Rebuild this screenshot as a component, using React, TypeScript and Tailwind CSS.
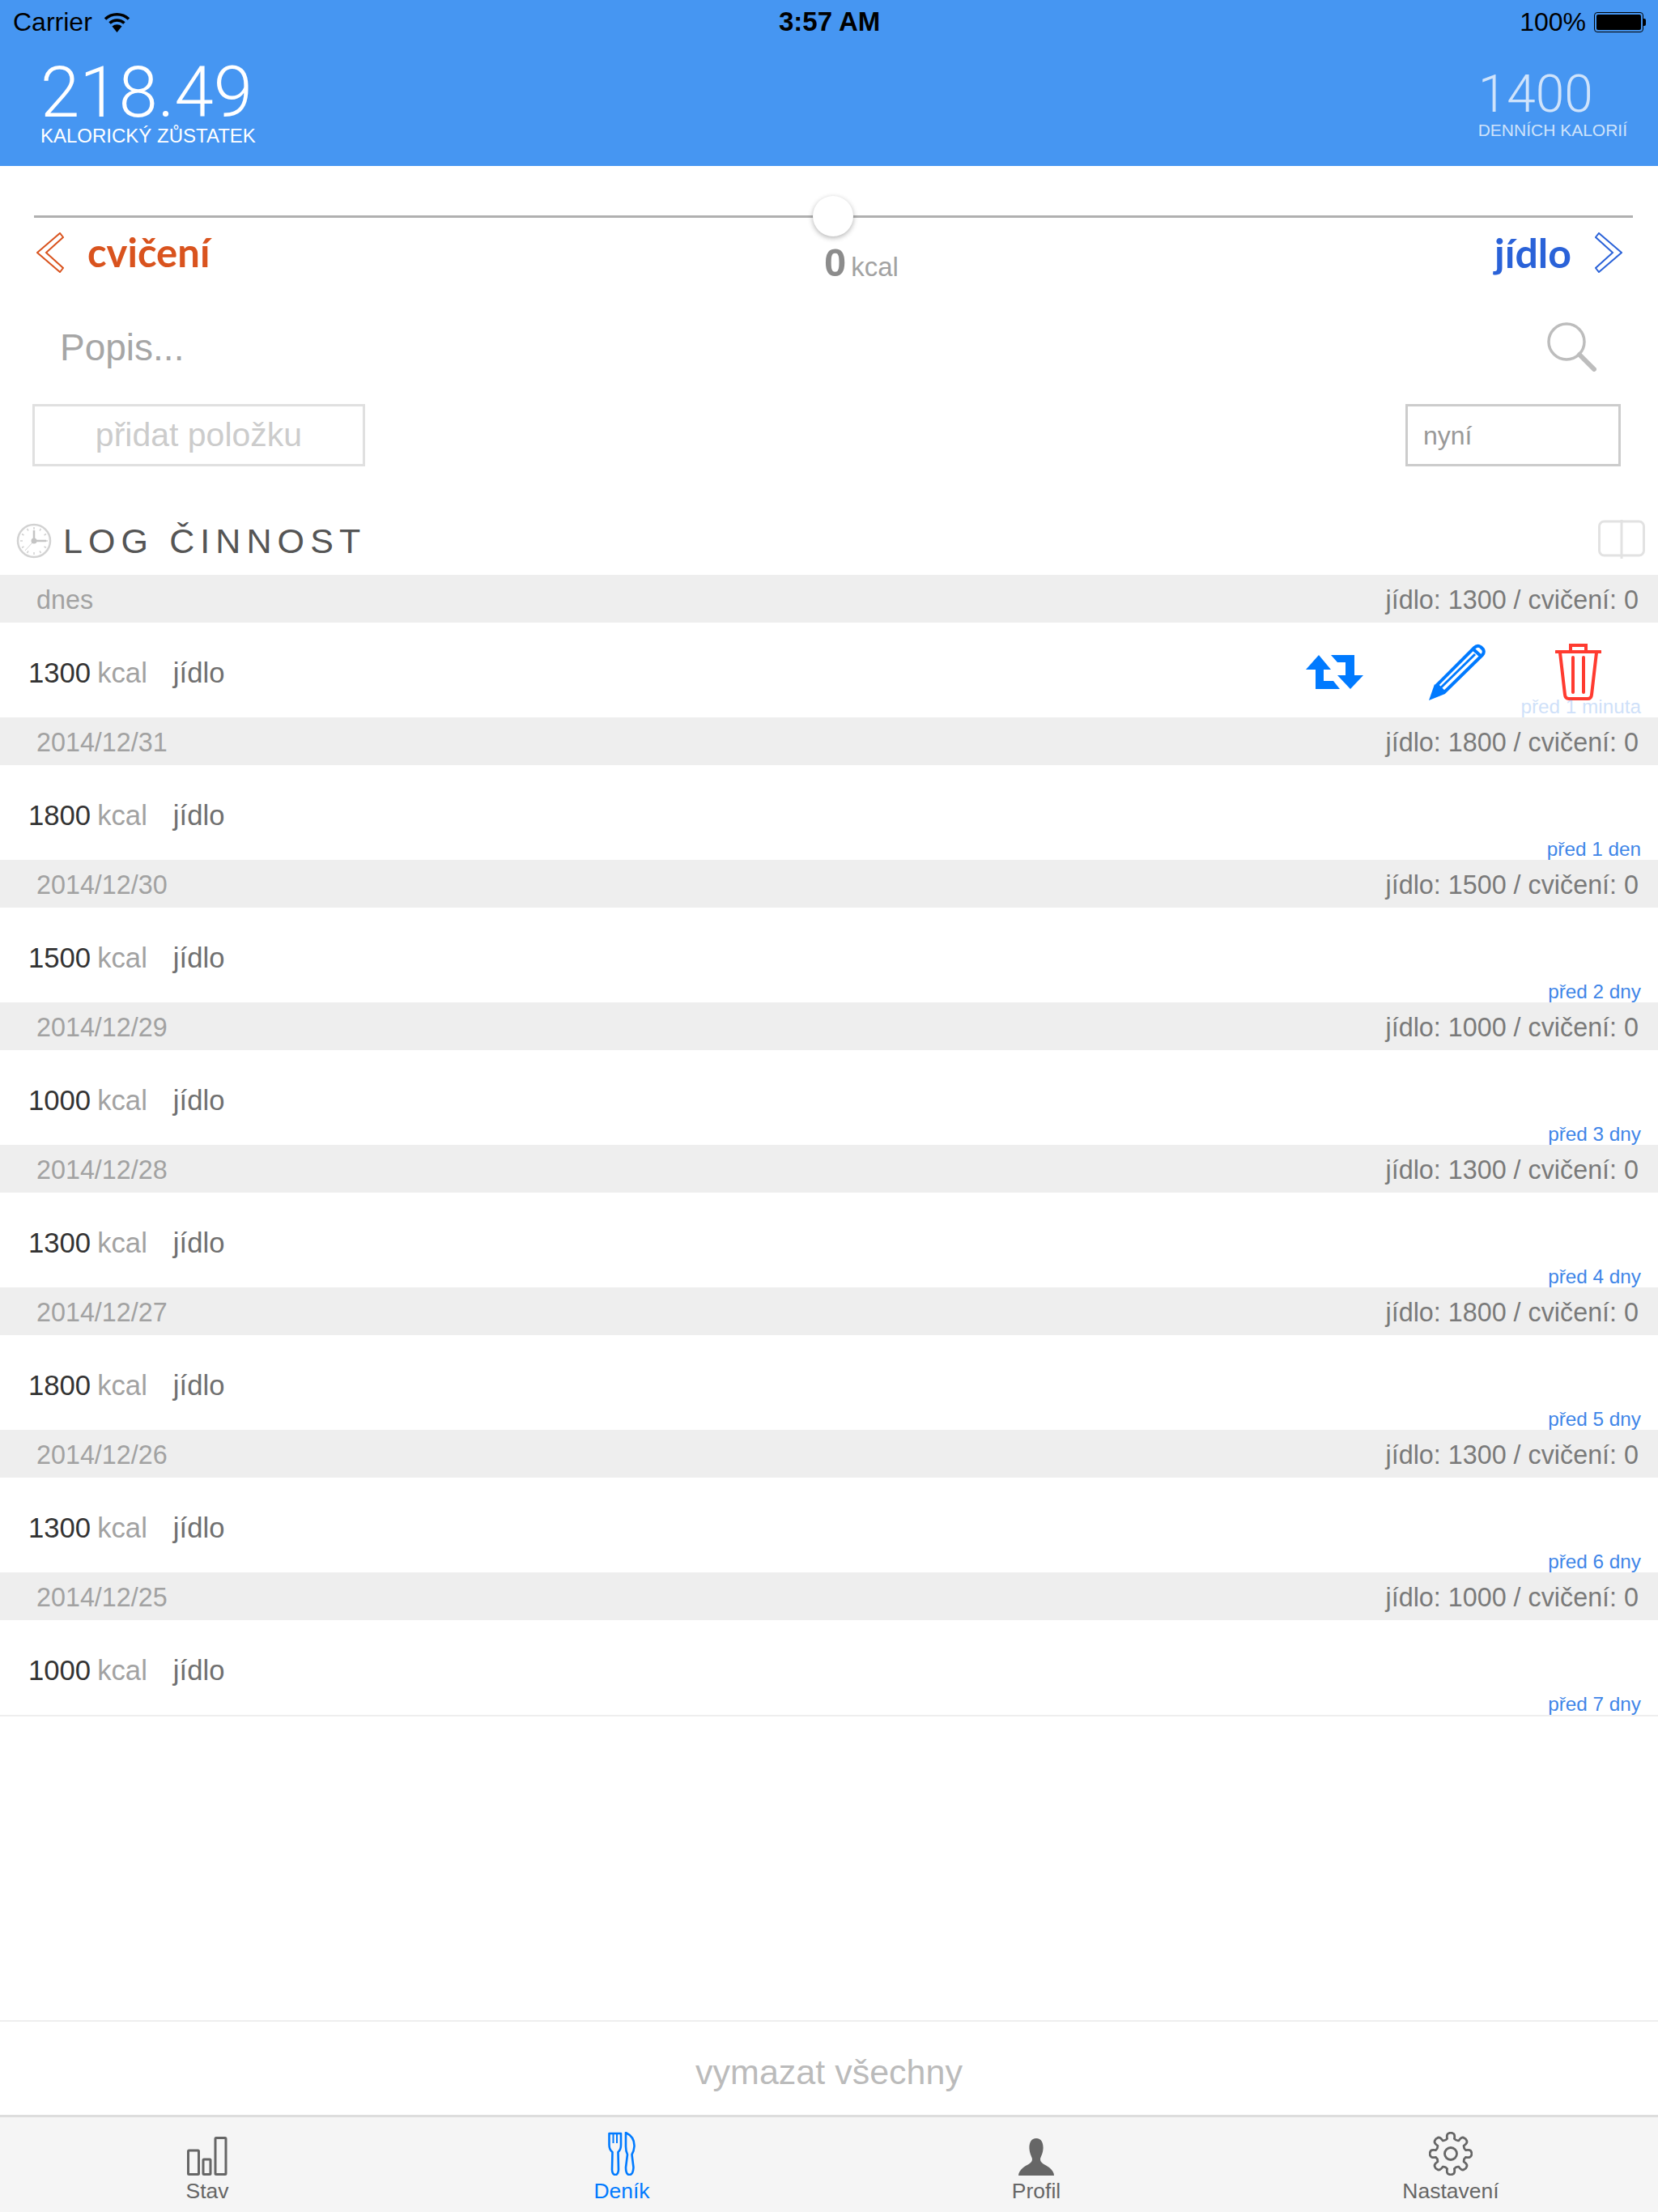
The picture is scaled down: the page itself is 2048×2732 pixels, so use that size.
import React from 'react';

interface LogGroup {
  day: string;
  food: number;
  ago: string;
}

const LOG_GROUPS: LogGroup[] = [
  { day: 'dnes', food: 1300, ago: 'před 1 minuta' },
  { day: '2014/12/31', food: 1800, ago: 'před 1 den' },
  { day: '2014/12/30', food: 1500, ago: 'před 2 dny' },
  { day: '2014/12/29', food: 1000, ago: 'před 3 dny' },
  { day: '2014/12/28', food: 1300, ago: 'před 4 dny' },
  { day: '2014/12/27', food: 1800, ago: 'před 5 dny' },
  { day: '2014/12/26', food: 1300, ago: 'před 6 dny' },
  { day: '2014/12/25', food: 1000, ago: 'před 7 dny' },
];

function gearPath(cx: number, cy: number, outer: number, inner: number, teeth: number) {
  const pts: string[] = [];
  const step = (Math.PI * 2) / teeth;
  for (let i = 0; i < teeth; i++) {
    const a = i * step - Math.PI / 2;
    const at = (r: number, o: number) =>
      `${(cx + r * Math.cos(a + o * step)).toFixed(2)} ${(cy + r * Math.sin(a + o * step)).toFixed(2)}`;
    pts.push(`${i === 0 ? 'M' : 'L'}${at(inner, -0.3)}`);
    pts.push(`Q${at(outer, -0.28)} ${at(outer, -0.1)}`);
    pts.push(`Q${at(outer + 1, 0)} ${at(outer, 0.1)}`);
    pts.push(`Q${at(outer, 0.28)} ${at(inner, 0.3)}`);
    pts.push(`Q${at(inner - 2, 0.5)} ${at(inner, 0.7)}`);
  }
  return pts.join(' ') + 'Z';
}

function DoubleChevron({ dir, color }: { dir: 'left' | 'right'; color: string }) {
  return (
    <svg width="34" height="50" viewBox="0 0 34 50" className={dir === 'right' ? 'scale-x-[-1]' : ''}>
      <path d="M1 25 L29 1 L33 6 L12 25 L33 44 L29 49 Z" fill="none" stroke={color} strokeWidth="2" />
    </svg>
  );
}

function WifiIcon() {
  return (
    <svg width="33" height="25" viewBox="0 0 33 25" fill="none" stroke="#000">
      <path d="M2 8.5 A21 21 0 0 1 31 8.5" strokeWidth="3.6" />
      <path d="M7.5 13.5 A13.5 13.5 0 0 1 25.5 13.5" strokeWidth="3.6" />
      <path d="M16.5 25 L10.5 17.5 A9 9 0 0 1 22.5 17.5 Z" fill="#000" stroke="none" />
    </svg>
  );
}

function Battery() {
  return (
    <div className="flex items-center">
      <div className="w-[61px] h-[25px] rounded-[4px] border border-black p-[2px]">
        <div className="w-full h-full rounded-[2px] bg-black" />
      </div>
      <div className="w-[3px] h-[9px] rounded-r-[2px] bg-black" />
    </div>
  );
}

function ClockIcon() {
  return (
    <svg width="44" height="44" viewBox="0 0 44 44" fill="none" stroke="#d2d2d2">
      <circle cx="22" cy="22" r="20" strokeWidth="2.5" />
      <path d="M22 5v3M22 36v3M5 22h3M36 22h3M13.5 7l1.5 2.5M30.5 7L29 9.5M7 13.5l2.5 1.5M37 13.5L34.5 15M7 30.5L9.5 29M37 30.5L34.5 29M13.5 37l1.5-2.5M30.5 37L29 34.5" strokeWidth="1.5" />
      <path d="M22 9 V22 H37" strokeWidth="2.5" stroke="#c4c4c4" />
      <path d="M22 22 L11 34" strokeWidth="1" />
      <circle cx="22" cy="22" r="3.5" fill="#c4c4c4" stroke="none" />
    </svg>
  );
}

function BookIcon() {
  return (
    <svg width="58" height="48" viewBox="0 0 58 48" fill="none" stroke="#e2e2e2" strokeWidth="3">
      <rect x="1.5" y="2" width="55" height="42" rx="6" />
      <path d="M29 0 V48" />
    </svg>
  );
}

function SearchIcon() {
  return (
    <svg width="62" height="62" viewBox="0 0 62 62" fill="none" stroke="#bdbdbd">
      <circle cx="25" cy="25" r="22" strokeWidth="3.5" />
      <path d="M41 41 L59 59" strokeWidth="6" strokeLinecap="round" />
    </svg>
  );
}

function RepeatIcon() {
  return (
    <svg width="71" height="42" viewBox="0 0 71 42" fill="#007aff">
      <path d="M16 0 L31 18 H22 V32 H34 L42 42 H12 V18 H0 Z" />
      <path d="M55 42 L71 25 H60 V0 H31 L39 9 H49 V25 H39 Z" />
    </svg>
  );
}

function PencilIcon() {
  return (
    <svg width="70" height="70" viewBox="0 0 70 70" fill="none" stroke="#007aff" strokeWidth="4" strokeLinejoin="round">
      <path d="M10 51 L56 5 Q60 1 64 4 L67 7 Q69 11 66 14 L19 60 Z" />
      <path d="M55 7 L65 16" />
      <path d="M14 55 L57 13" strokeWidth="3" />
      <path d="M0 70 L7 50 L20 62 Z" fill="#007aff" stroke="none" />
    </svg>
  );
}

function TrashIcon() {
  return (
    <svg width="57" height="70" viewBox="0 0 57 70" fill="none" stroke="#ff3b30" strokeWidth="4" strokeLinecap="round">
      <path d="M1 10 H56" />
      <path d="M19 9 V2 H38 V9" />
      <path d="M6 11 L12 63 Q12.5 68 17 68 H40 Q44.5 68 45 63 L51 11" />
      <path d="M22 17 V60 M35 17 V60" />
    </svg>
  );
}

function StavIcon() {
  return (
    <svg width="50" height="48" viewBox="0 0 50 48" fill="none" stroke="#666" strokeWidth="3">
      <rect x="1.5" y="17" width="13" height="29.5" rx="1" />
      <rect x="20" y="28" width="9" height="18.5" rx="1" />
      <rect x="35" y="1.5" width="13" height="45" rx="1" />
    </svg>
  );
}

function CutleryIcon() {
  return (
    <svg width="34" height="54" viewBox="0 0 34 54" fill="none" stroke="#007aff" strokeWidth="2.6" strokeLinejoin="round">
      <path d="M1.5 2 H16 V16 Q16 22 12.5 25 L13 47 Q12.5 53 9 53 Q5.5 53 5 47 L5.5 25 Q1.5 22 1.5 16 Z" />
      <path d="M6.5 2 V14 M11 2 V14" strokeWidth="2" />
      <path d="M22 1 Q33 6 32.5 18 Q32 24 29.5 28 L31.5 44 Q31 53 26.5 53 Q22 53 22 44 L24 28 Q22 24 22 18 Z" />
    </svg>
  );
}

function ProfileIcon() {
  return (
    <svg width="44" height="46" viewBox="0 0 44 46" fill="#666">
      <path d="M22 0 C29 0 31 7 30.5 13 C30 20 27 23 27 26 C27 31 33 32 38 36 C42 39 44 43 44 46 H0 C0 43 2 39 6 36 C11 32 17 31 17 26 C17 23 14 20 13.5 13 C13 7 15 0 22 0 Z" />
    </svg>
  );
}

function GearIcon() {
  return (
    <svg width="54" height="54" viewBox="0 0 54 54" fill="none" stroke="#666" strokeWidth="2.8">
      <path d={gearPath(27, 27, 25.5, 19, 8)} />
      <circle cx="27" cy="27" r="7.5" />
    </svg>
  );
}

function LogSection({ group, index }: { group: LogGroup; index: number }) {
  const isFirst = index === 0;
  return (
    <div>
      <div className="h-[59px] bg-[#eeeeee] flex items-center justify-between pl-[45px] pr-[24px] pt-[4px] text-[32.3px]">
        <span className="text-[#a2a2a2]">{group.day}</span>
        <span className="text-[#7a7a7a]">jídlo: {group.food} / cvičení: 0</span>
      </div>
      <div className="relative h-[117px] flex items-center pl-[35px] pr-[70px] pt-[8px] text-[34.7px]">
        <span className="text-[#333333]">{group.food}</span>
        <span className="ml-[8px] text-[#a2a2a2]">kcal</span>
        <span className="ml-[32px] text-[#707070]">jídlo</span>
        {isFirst && (
          <div className="ml-auto flex items-center -mt-[4px]">
            <RepeatIcon />
            <div className="ml-[81px]"><PencilIcon /></div>
            <div className="ml-[86px]"><TrashIcon /></div>
          </div>
        )}
        <span className={`absolute right-[21px] bottom-[-5px] text-[24.3px] text-[#3f86e8] ${isFirst ? 'opacity-25' : ''}`}>
          {group.ago}
        </span>
      </div>
    </div>
  );
}

export default function App() {
  return (
    <div className="w-[2048px] h-[2732px] flex flex-col bg-white overflow-hidden font-['Liberation_Sans',sans-serif]">
      {/* Header */}
      <div className="h-[205px] bg-[#4696f2] shrink-0">
        <div className="relative h-[54px] flex items-center justify-between pl-[16px] pr-[15px] text-[32px] text-black">
          <div className="flex items-center gap-[14px]">
            <span>Carrier</span>
            <WifiIcon />
          </div>
          <span className="absolute left-[962px] font-bold text-[33px]">3:57 AM</span>
          <div className="flex items-center gap-[10px]">
            <span>100%</span>
            <Battery />
          </div>
        </div>
        <div className="flex items-start justify-between pl-[50px] pr-[38px]">
          <div className="flex flex-col text-white">
            <span className="text-[87px] leading-[78px] font-['Roboto',sans-serif] font-light mt-[21px]">218.49</span>
            <span className="text-[24px] leading-[30px]">KALORICKÝ ZŮSTATEK</span>
          </div>
          <div className="flex flex-col items-start text-[#cfe3fb] mt-[31px]">
            <span className="text-[64px] leading-[64px] font-['Roboto',sans-serif] font-light">1400</span>
            <span className="text-[21px] leading-[24px]">DENNÍCH KALORIÍ</span>
          </div>
        </div>
      </div>

      {/* Slider + type switch */}
      <div className="relative h-[505px] shrink-0">
        <div className="absolute left-[42px] top-[61px] w-[1975px] h-[3px] bg-[#b0b0b0]" />
        <div className="absolute left-[1004px] top-[37px] w-[50px] h-[50px] rounded-full bg-white shadow-[0_2px_6px_rgba(0,0,0,0.3)]" />

        <div className="flex items-center justify-between pl-[45px] pr-[44px] pt-[56px] h-[158px]">
          <div className="flex items-center gap-[29px]">
            <DoubleChevron dir="left" color="#d9531e" />
            <span className="text-[49px] font-['Lato',sans-serif] font-bold text-[#d9531e]">cvičení</span>
          </div>
          <div className="absolute left-[1018px] top-[83px] flex items-baseline text-[#8c8c8c]">
            <span className="text-[49px] font-bold">0</span>
            <span className="text-[33px] ml-[6px] text-[#a2a2a2]">kcal</span>
          </div>
          <div className="flex items-center gap-[29px]">
            <span className="text-[50px] font-['Lato',sans-serif] font-bold text-[#2a62d8]">jídlo</span>
            <DoubleChevron dir="right" color="#2a62d8" />
          </div>
        </div>

        <div className="flex items-center justify-between pl-[74px] pr-[76px] h-[90px] mt-[21px]">
          <span className="text-[46px] text-[#a6a6a6]">Popis...</span>
          <div className="-mt-[3px]"><SearchIcon /></div>
        </div>

        <div className="flex items-start justify-between pl-[40px] pr-[46px] mt-[25px]">
          <div className="w-[411px] h-[77px] border-[3px] border-[#e0e0e0] flex items-center justify-center text-[41px] text-[#cccccc]">
            přidat položku
          </div>
          <div className="w-[266px] h-[77px] border-[3px] border-[#cccccc] flex items-center pl-[19px] text-[32px] text-[#999999]">
            nyní
          </div>
        </div>

        <div className="absolute left-0 right-0 bottom-[7px] h-[70px] flex items-center justify-between pl-[20px] pr-[16px]">
          <div className="flex items-center gap-[14px]">
            <ClockIcon />
            <span className="text-[43px] tracking-[0.165em] text-[#555555]">LOG ČINNOST</span>
          </div>
          <div className="-mt-[4px]"><BookIcon /></div>
        </div>
      </div>

      {/* Log */}
      <div className="flex-1 min-h-0">
        <div className="border-b-[2px] border-[#eeeeee]">
          {LOG_GROUPS.map((g, i) => (
            <LogSection key={g.day} group={g} index={i} />
          ))}
        </div>
      </div>

      {/* Clear all */}
      <div className="h-[117px] shrink-0 border-t-[2px] border-[#eeeeee] flex items-center justify-center pt-[10px] text-[43px] text-[#bbbbbb]">
        vymazat všechny
      </div>

      {/* Tab bar */}
      <div className="h-[120px] shrink-0 bg-[#f5f5f5] border-t-[3px] border-[#dddddd] grid grid-cols-4 text-[26.5px] text-[#666666]">
        {[
          { label: 'Stav', icon: <StavIcon /> },
          { label: 'Deník', icon: <CutleryIcon />, active: true },
          { label: 'Profil', icon: <ProfileIcon /> },
          { label: 'Nastavení', icon: <GearIcon /> },
        ].map((tab) => (
          <div key={tab.label} className={`flex flex-col items-center ${tab.active ? 'text-[#007aff]' : ''}`}>
            <div className="h-[54px] mt-[18px] flex items-end">{tab.icon}</div>
            <span className="leading-[30px] mt-[4px]">{tab.label}</span>
          </div>
        ))}
      </div>
    </div>
  );
}
